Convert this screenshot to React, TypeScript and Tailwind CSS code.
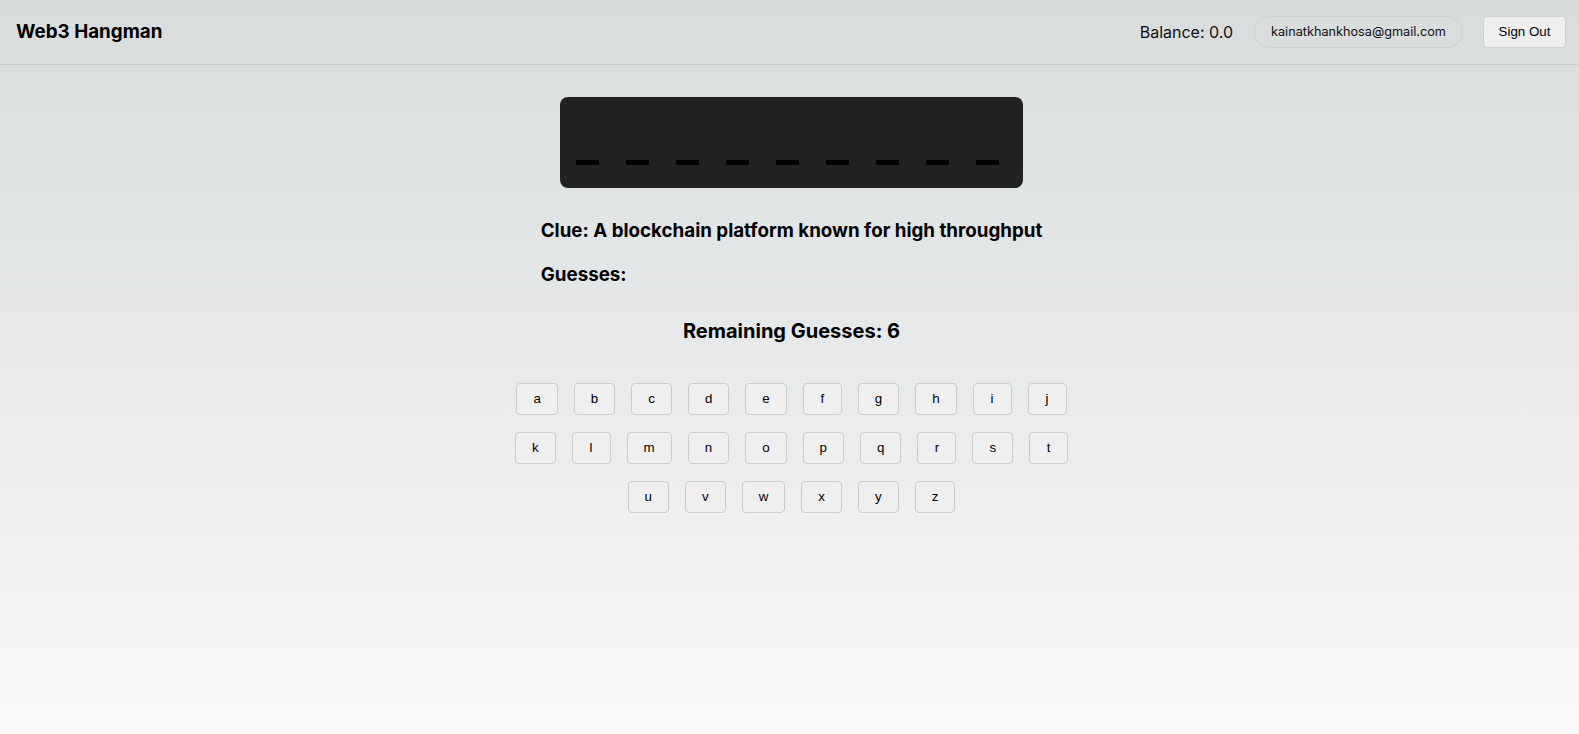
import React from "react";

const rows = [
  ["a", "b", "c", "d", "e", "f", "g", "h", "i", "j"],
  ["k", "l", "m", "n", "o", "p", "q", "r", "s", "t"],
  ["u", "v", "w", "x", "y", "z"],
];

export default function App() {
  return (
    <div
      className="min-h-[734px] w-full bg-gradient-to-b from-[#d8dcdd] to-[#f8f9f8] text-black"
      style={{ fontFamily: "Inter, 'Noto Sans', sans-serif" }}
    >
      <header className="h-[65px] flex items-center justify-between pl-4 pr-[13px] border-b border-[#c9cdcd]">
        <h1 className="text-[18.8px] font-bold">Web3 Hangman</h1>
        <div className="flex items-center">
          <span className="text-base text-[#111]">Balance: 0.0</span>
          <span className="ml-[21px] h-[32px] flex items-center px-4 rounded-full border border-[#cdd1d1] text-[12.7px] text-[#111]">
            kainatkhankhosa@gmail.com
          </span>
          <button
            className="ml-[20px] h-[32px] w-[83px] rounded-[4px] border border-[#cfcfcf] bg-[#efefef] text-[13.33px] text-black"
            style={{ fontFamily: "'Liberation Sans', Arial, sans-serif" }}
          >
            Sign Out
          </button>
        </div>
      </header>

      <main className="flex flex-col items-center pt-[32px] pl-[4px]">
        <div className="w-[463px] h-[91px] rounded-[8px] bg-[#222222] flex items-start pl-4 pt-[63px]">
          <div className="flex gap-[27px]">
            {Array.from({ length: 9 }).map((_, i) => (
              <div key={i} className="w-[23px] h-[5px] bg-black" />
            ))}
          </div>
        </div>

        <div className="mt-[29px] text-left">
          <p className="text-[18.75px] font-bold leading-[28px]">
            Clue: A blockchain platform known for high throughput
          </p>
          <p className="text-[18.75px] font-bold leading-[28px] mt-[16px]">Guesses:</p>
        </div>

        <h2 className="mt-[28px] text-xl font-bold leading-[28px]">Remaining Guesses: 6</h2>

        <div
          className="mt-[38px] flex flex-col items-center gap-[17px]"
          style={{ fontFamily: "'Liberation Sans', Arial, sans-serif" }}
        >
          {rows.map((row, ri) => (
            <div key={ri} className="flex gap-4">
              {row.map((l) => (
                <button
                  key={l}
                  className="h-[32px] min-w-[39px] px-4 rounded-[4px] border border-[#cccccc] bg-[#efefef] text-[13.33px] text-black"
                >
                  {l}
                </button>
              ))}
            </div>
          ))}
        </div>
      </main>
    </div>
  );
}
